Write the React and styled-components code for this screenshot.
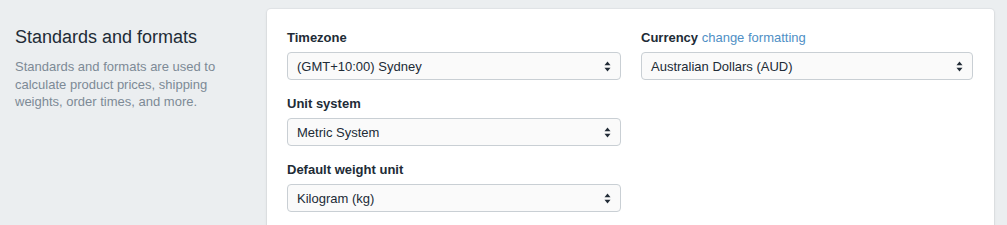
import React from "react";
import styled, { createGlobalStyle } from "styled-components";

const GlobalStyle = createGlobalStyle`
  html, body {
    margin: 0;
    padding: 0;
    background: #ebeef0;
    font-family: "Liberation Sans", Arial, Helvetica, sans-serif;
    -webkit-font-smoothing: antialiased;
  }
  #root { overflow: hidden; height: 225px; }
`;

const Layout = styled.div`
  display: flex;
  align-items: flex-start;
  padding-top: 9px;
`;

const Annotation = styled.div`
  box-sizing: border-box;
  width: 267px;
  flex: none;
  padding: 16px 30px 0 15px;
`;

const Title = styled.h2`
  margin: 0;
  font-size: 18px;
  line-height: 24px;
  font-weight: 400;
  color: #212b36;
`;

const Description = styled.p`
  margin: 9px 0 0;
  font-size: 13px;
  line-height: 17.5px;
  color: #7d8a96;
`;

const Card = styled.section`
  box-sizing: border-box;
  width: 727px;
  flex: none;
  min-height: 260px;
  background: #ffffff;
  border-radius: 4px;
  box-shadow: 0 0 0 1px rgba(63, 63, 68, 0.04), 0 1px 3px 0 rgba(63, 63, 68, 0.12);
  padding: 20px 21px 20px 20px;
  display: grid;
  grid-template-columns: 334px 332px;
  column-gap: 20px;
  align-items: start;
`;

const Column = styled.div`
  display: flex;
  flex-direction: column;
  gap: 15px;
`;

const Field = styled.div`
  display: flex;
  flex-direction: column;
  gap: 5px;
`;

const Label = styled.label`
  font-size: 13px;
  line-height: 18px;
  font-weight: 700;
  color: #212b36;
`;

const Link = styled.a`
  font-weight: 400;
  color: #4f8fc5;
  text-decoration: none;
`;

const SelectBox = styled.div`
  box-sizing: border-box;
  height: 28px;
  display: flex;
  align-items: center;
  justify-content: space-between;
  padding: 0 9px 0 9px;
  border: 1px solid #c9cfd4;
  border-radius: 4px;
  background: #fafafa;
  font-size: 13px;
  color: #212b36;
`;

const Arrows = () => (
  <svg width="7" height="11" viewBox="0 0 7 11" aria-hidden="true">
    <path d="M3.5 0.5 L6.5 4.2 L0.5 4.2 Z" fill="#212b36" />
    <path d="M3.5 10.5 L6.5 6.8 L0.5 6.8 Z" fill="#212b36" />
  </svg>
);

const Select = ({ value }) => (
  <SelectBox>
    <span>{value}</span>
    <Arrows />
  </SelectBox>
);

export default function App() {
  return (
    <>
      <GlobalStyle />
      <Layout>
        <Annotation>
          <Title>Standards and formats</Title>
          <Description>
            Standards and formats are used to calculate product prices, shipping
            weights, order times, and more.
          </Description>
        </Annotation>
        <Card>
          <Column>
            <Field>
              <Label>Timezone</Label>
              <Select value="(GMT+10:00) Sydney" />
            </Field>
            <Field>
              <Label>Unit system</Label>
              <Select value="Metric System" />
            </Field>
            <Field>
              <Label>Default weight unit</Label>
              <Select value="Kilogram (kg)" />
            </Field>
          </Column>
          <Column>
            <Field>
              <Label>
                Currency <Link href="#">change formatting</Link>
              </Label>
              <Select value="Australian Dollars (AUD)" />
            </Field>
          </Column>
        </Card>
      </Layout>
    </>
  );
}
